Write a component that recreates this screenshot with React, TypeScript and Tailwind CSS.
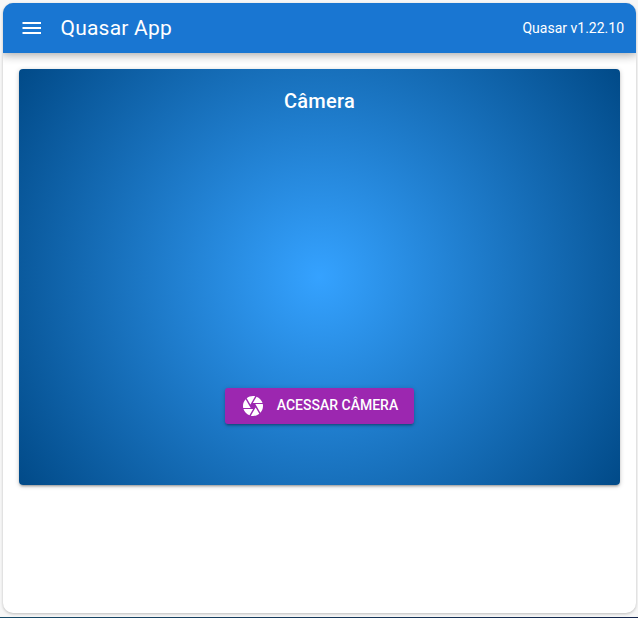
function MenuIcon() {
  return (
    <svg className="size-6" viewBox="0 0 24 24" fill="currentColor" aria-hidden="true">
      <path d="M2.5 18H21v-2H2.5v2zm0-5H21v-2H2.5v2zm0-7v2H21V6H2.5z" />
    </svg>
  );
}

function CameraIcon() {
  return (
    <svg className="size-6" viewBox="0 0 24 24" fill="currentColor" aria-hidden="true">
      <path d="M9.4 10.5l4.77-8.26C13.47 2.09 12.75 2 12 2c-2.4 0-4.6.85-6.32 2.25l3.66 6.35.06-.1zM21.54 9c-.92-2.92-3.15-5.26-6-6.34L11.88 9h9.66zm.26 1h-7.49l.29.5 4.76 8.25C21 16.97 22 14.61 22 12c0-.69-.07-1.35-.2-2zM8.54 12l-3.9-6.75C3.01 7.03 2 9.39 2 12c0 .69.07 1.35.2 2h7.49l-1.15-2zm-6.08 3c.92 2.92 3.15 5.26 6 6.34L12.12 15H2.46zm11.27 0l-3.9 6.76c.7.15 1.42.24 2.17.24 2.4 0 4.6-.85 6.32-2.25l-3.66-6.35-.93 1.6z" />
    </svg>
  );
}

export default function App() {
  return (
    <div className="flex h-[618px] w-[638px] flex-col overflow-hidden bg-[#f7f7f7] pt-[3px] font-[Roboto,sans-serif] text-white">
      <div className="ml-[3px] h-[610px] w-[633px] shrink-0 rounded-[10px] bg-white shadow-[0_1px_3px_rgba(0,0,0,0.24)]">
        <div className="flex h-full flex-col overflow-hidden rounded-[10px]">
          <header className="flex h-[50px] shrink-0 items-center bg-[#1976d2] pr-3 pl-[17px] shadow-[0_0_10px_2px_rgba(0,0,0,0.2),0_0_10px_rgba(0,0,0,0.24)]">
            <button aria-label="Menu">
              <MenuIcon />
            </button>
            <h1 className="ml-[16.5px] flex-1 text-[21px] leading-none tracking-[0.21px]">Quasar App</h1>
            <span className="text-sm">Quasar v1.22.10</span>
          </header>
          <main className="p-4">
            <section className="flex h-[416px] flex-col items-center justify-between rounded bg-[radial-gradient(circle,#35a2ff_0%,#014a88_100%)] pt-4 pb-[61px] shadow-[0_1px_5px_rgba(0,0,0,0.2),0_2px_2px_rgba(0,0,0,0.14),0_3px_1px_-2px_rgba(0,0,0,0.12)]">
              <h2 className="text-xl leading-8 font-medium tracking-[0.25px]">Câmera</h2>
              <button className="flex h-9 items-center gap-3 rounded-[3px] bg-[#9c27b0] px-4 text-sm font-medium uppercase shadow-[0_1px_5px_rgba(0,0,0,0.2),0_2px_2px_rgba(0,0,0,0.14),0_3px_1px_-2px_rgba(0,0,0,0.12)]">
                <CameraIcon />
                <span className="pb-0.5">Acessar câmera</span>
              </button>
            </section>
          </main>
        </div>
      </div>
      <div className="mt-auto h-px shrink-0 bg-[linear-gradient(to_right,#184a68,#14264c)]" />
    </div>
  );
}
